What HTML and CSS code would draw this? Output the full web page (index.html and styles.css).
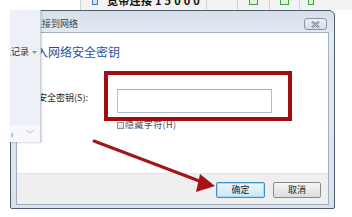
FILE: index.html
```html
<!DOCTYPE html>
<html lang="zh-CN">
<head>
<meta charset="utf-8">
<title>连接到网络</title>
<link rel="stylesheet" href="styles.css">
</head>
<body>
<div class="screen">
  <div class="bgbar">
    <div class="bg-blank"></div>
    <div class="bg-toolbar">
      <div class="tb-item tb-main"><span class="tb-icon"></span><span class="tb-text">宽带连接 1 5 0 0 0</span></div>
      <div class="tb-item tb-w31"></div>
      <div class="tb-item tb-w32"><span class="g-icon"></span></div>
      <div class="tb-item tb-w30"><span class="g-icon"></span></div>
      <div class="tb-item tb-last"><span class="g-icon g-small"></span></div>
    </div>
  </div>

  <div class="stage">
    <div class="dialog">
      <div class="titlebar">
        <span class="title">连接到网络</span>
        <span class="close"><svg width="9" height="7" viewBox="0 0 9 7"><path d="M1 0.5 L8 6.5 M8 0.5 L1 6.5" stroke="#6a7584" stroke-width="2" fill="none"/><path d="M1 0.5 L8 6.5 M8 0.5 L1 6.5" stroke="#eef2f6" stroke-width="0.7" fill="none"/></svg></span>
      </div>
      <div class="client">
        <div class="content">
          <h1 class="heading">键入网络安全密钥</h1>
          <div class="field-row">
            <span class="label">安全密钥(S):</span>
            <span class="input"></span>
          </div>
          <div class="check-row">
            <span class="checkbox"></span>
            <span class="check-text">隐藏字符(H)</span>
          </div>
        </div>
        <div class="footer">
          <span class="btn primary">确定</span>
          <span class="btn">取消</span>
        </div>
      </div>
    </div>
  </div>

  <div class="side-panel">
    <div class="side-item"><span class="side-text">浏览记录</span><svg class="caret" width="5" height="3" viewBox="0 0 5 3"><path d="M0 0 L5 0 L2.5 3 Z" fill="#8a8f99"/></svg></div>
    <div class="side-bottom"><span class="side-mark">ı</span><span class="side-chev">﹀</span></div>
  </div>

  <svg class="annot" width="352" height="217" viewBox="0 0 352 217">
    <rect x="106" y="73" width="184" height="46" fill="none" stroke="#a30d12" stroke-width="4"/>
    <line x1="94" y1="141" x2="202" y2="182" stroke="#a51419" stroke-width="3" stroke-linecap="round"/>
    <polygon points="215,186 200,174 196,192" fill="#a51419"/>
  </svg>
</div>
</body>
</html>
```

FILE: styles.css
```css
* { box-sizing: border-box; margin: 0; padding: 0; }
html, body { width: 352px; height: 217px; overflow: hidden; background: #ffffff; }
body {
  font-family: "Noto Sans CJK SC", "Liberation Sans", sans-serif;
  font-size: 9px;
  color: #222;
}
.screen { position: relative; width: 352px; height: 217px; overflow: hidden; background: #fff; }

/* background window toolbar */
.bgbar { display: flex; height: 10px; }
.bg-blank { width: 80px; }
.bg-toolbar {
  flex: 1;
  display: flex;
  height: 10px;
  overflow: hidden;
  background: #f3f3f3;
  border-left: 1px solid #cfcfcf;
}
.tb-item {
  height: 10px;
  display: flex;
  align-items: flex-end;
  justify-content: center;
  padding-bottom: 5px;
  border-right: 1px solid #d4d4d4;
  overflow: hidden;
}
.tb-main { width: 126px; justify-content: flex-start; padding-left: 11px; gap: 9px; padding-bottom: 5px; }
.tb-icon {
  flex: none;
  width: 6px; height: 12px;
  border: 1px solid #3b79c6;
  background: #cfe1f6;
}
.tb-text { font-size: 11px; line-height: 10px; color: #111; font-weight: bold; white-space: nowrap; letter-spacing: 0.3px; }
.tb-w31 { width: 31px; }
.tb-w32 { width: 32px; }
.tb-w30 { width: 30px; }
.tb-last { flex: 1; border-right: none; justify-content: flex-start; padding-left: 8px; }
.g-icon { width: 9px; height: 10px; border: 1px solid #3ea23e; background: #dff2df; }
.g-small { width: 6px; }

/* dialog window */
.stage { padding-left: 10px; }
.dialog {
  width: 325px;
  height: 199px;
  border: 1px solid #4d5b6b;
  border-radius: 6px 6px 2px 2px;
  background: linear-gradient(#d6e0eb, #e3eaf2 22px, #dae3ed);
  display: flex;
  flex-direction: column;
}
.titlebar {
  height: 21px;
  flex: none;
  display: flex;
  align-items: flex-start;
  padding: 7px 7px 0 22px;
}
.title { font-size: 9px; line-height: 12px; color: #3a3f46; }
.close {
  margin-left: auto;
  width: 23px;
  height: 12px;
  border: 1px solid #8794a3;
  border-radius: 3px;
  background: linear-gradient(#edf1f5, #d4dce6);
  display: flex;
  align-items: center;
  justify-content: center;
}
.client {
  flex: none;
  height: 173px;
  margin: 0 5px;
  border: 1px solid #a2afbf;
  background: #fff;
  display: flex;
  flex-direction: column;
}
.content { flex: 1; padding: 11px 0 0 7px; }
.heading {
  font-size: 12px;
  line-height: 16px;
  font-weight: normal;
  color: #1f4f9f;
  white-space: nowrap;
}
.field-row { display: flex; margin-top: 29px; padding-left: 14px; }
.label { width: 79px; padding-top: 3px; line-height: 12px; color: #222; white-space: nowrap; }
.input {
  width: 155px;
  height: 24px;
  border: 1px solid #b9bcc4;
  border-top-color: #a9acb4;
  background: #fff;
}
.check-row {
  display: flex;
  align-items: center;
  gap: 1px;
  margin: 7px 0 0 93px;
  height: 10px;
}
.checkbox {
  width: 7px; height: 7px;
  border: 1px solid #8e8f8f;
  background: linear-gradient(#f4f4f4, #e2e2e2);
}
.check-text { line-height: 10px; color: #3e4a5c; white-space: nowrap; letter-spacing: 0.4px; }

.footer {
  flex: none;
  height: 31px;
  background: #efefef;
  border-top: 1px solid #e2e2e2;
  display: flex;
  justify-content: flex-end;
  align-items: flex-start;
  gap: 8px;
  padding: 8px 7px 0 0;
}
.btn {
  width: 48px;
  height: 16px;
  border: 1px solid #8b8b8b;
  border-radius: 2px;
  background: linear-gradient(#f5f5f5, #dcdcdc);
  font-size: 9px;
  line-height: 14px;
  text-align: center;
  color: #222;
}
.btn.primary {
  width: 49px;
  border-color: #3b8ec6;
  background: linear-gradient(#eef7fd, #cbe6f7);
  box-shadow: inset 0 0 0 1px #a8dcf6;
}

/* floating side panel over the dialog */
.side-panel {
  position: absolute;
  left: 10px;
  top: 10px;
  width: 31px;
  height: 132px;
  background: #edf0f7;
  border-right: 1px solid #c9cdd8;
  box-shadow: 1px 1px 2px rgba(0,0,0,0.15);
  display: flex;
  flex-direction: column;
  overflow: hidden;
}
.side-item {
  margin-top: 37px;
  height: 10px;
  line-height: 10px;
  color: #333;
  white-space: nowrap;
  display: flex;
  justify-content: flex-end;
  align-items: center;
  gap: 3px;
  padding-right: 3px;
}
.side-text { flex: none; }
.caret { flex: none; }
.side-bottom {
  margin-top: auto;
  height: 17px;
  background: #f7f8fb;
  display: flex;
  align-items: center;
  justify-content: space-between;
  padding: 0 6px 0 1px;
  color: #9aa0aa;
  font-size: 8px;
}
.side-mark { color: #666; }

/* annotation overlay */
.annot { position: absolute; left: 0; top: 0; pointer-events: none; }
```
